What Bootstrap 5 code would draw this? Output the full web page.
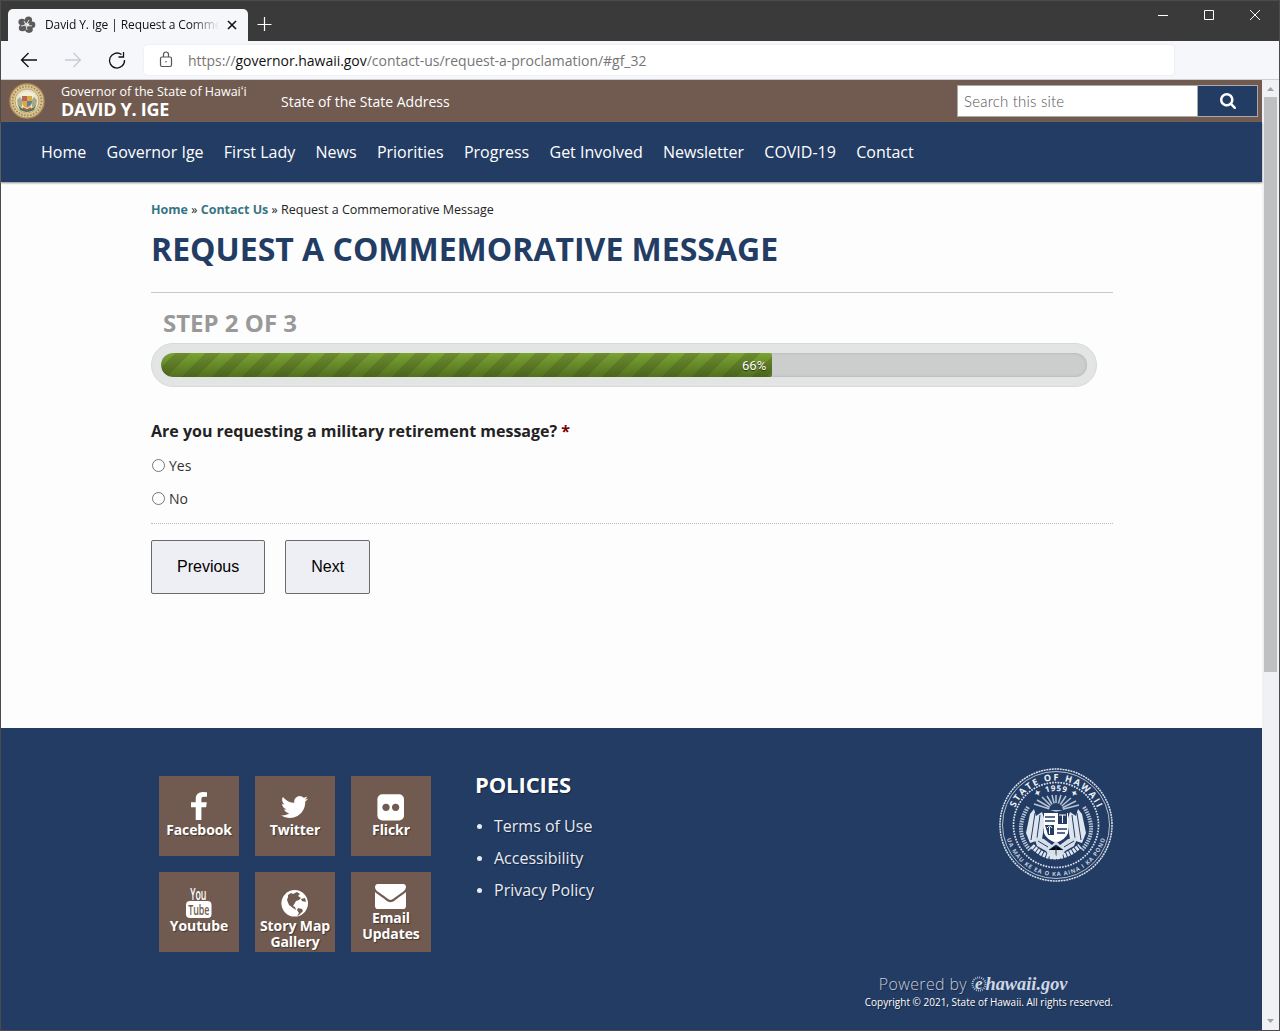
<!DOCTYPE html>
<html lang="en">
<head>
<meta charset="utf-8">
<meta name="viewport" content="width=device-width, initial-scale=1">
<title>David Y. Ige | Request a Commemorative Message</title>
<link href="https://cdn.jsdelivr.net/npm/bootstrap@5.3.0/dist/css/bootstrap.min.css" rel="stylesheet">
<style>
:root{--navy:#233c64;--brown:#715b50}
body{font-family:"Open Sans",sans-serif;color:#222;background:#3a3a3a;overflow:hidden}
a{text-decoration:none}
svg{display:block;flex:none}
.window-frame{width:1280px;height:1031px;border:1px solid #4b4b4b;background:#3a3a3a}
.titlebar{height:40px;padding-left:7px}
.browser-tab{width:240px;height:32px;background:#f6f7fb;border-radius:5px 5px 0 0;padding:0 10px}
.tab-title{width:174px;margin-left:9px;font-size:12px;letter-spacing:-.1px;color:#111;overflow:hidden;-webkit-mask-image:linear-gradient(90deg,#000 84%,transparent)}
.toolbar{height:39px;background:#f6f7fb;border-bottom:1px solid #cdced1;padding-left:17px}
.address{width:1030px;height:30px;background:#fff;border-radius:4px;box-shadow:0 0 2px #dfe1e7;margin-left:18px;padding-left:15px;font-size:14px;color:#767676;letter-spacing:-.03px}
.address b{font-weight:400;color:#111}
.viewport-row{height:950px}
.page{width:1261px;background:#fdfdfd}
.scrollbar{width:17px;background:#f0f1f5}
.scroll-thumb{width:13px;height:575px;background:#bfc0c2;margin:0 2px}
.agency{height:42px;background:var(--brown);color:#fff;padding:0 4px 0 8px}
.agency-name{width:220px;margin-left:16px;line-height:16px}
.agency-name span{font-size:12.5px;display:block}
.agency-name strong{font-size:18px;display:block;letter-spacing:-.3px;line-height:18px}
.site-search{width:301px;height:32px;border:1px solid #aaa;background:#fff}
.site-search input{width:239px;border:0;padding:0 6px;font:300 15px Lato,sans-serif;letter-spacing:.2px;color:#555;outline:0}
.site-search input::placeholder{color:#555;opacity:1}
.site-search button{width:60px;border:0;border-left:1px solid #aaa;background:var(--navy)}
.mainnav{height:60px;background:var(--navy);padding-left:40px;gap:20.3px;box-shadow:0 1px 2px #888;position:relative}
.mainnav a{color:#fff;font-size:16px}
.content{width:962px;margin-left:150px;height:546px;padding-top:19px}
.crumbs{font-size:12.5px;line-height:18px}
.crumbs a{color:#387582;font-weight:700}
h1{font-size:32px;line-height:40px;font-weight:700;color:var(--navy);margin:10px 0 0;padding-bottom:23px;height:64px;border-bottom:1px solid #c8caca}
.step-title{font-size:24px;line-height:32px;font-weight:700;color:#999;margin:14px 0 4px 12px}
.meter{width:946px;height:44px;padding:9px;border:1px solid #d8dada;border-radius:22px;background:#e3e5e4}
.meter .progress{height:24px;border-radius:12px;background:#cccecd;box-shadow:inset 0 0 3px #aaa}
.meter .progress-bar{border-radius:12px 2px 2px 12px;background-image:linear-gradient(to bottom,transparent,rgba(40,60,10,.5)),linear-gradient(135deg,#7ba334 25%,#6c8c2e 25%,#6c8c2e 50%,#7ba334 50%,#7ba334 75%,#6c8c2e 75%);background-size:100% 100%,30px 30px;text-align:right;padding-right:6px;font:13px Roboto,sans-serif;color:#fff;text-shadow:0 1px 1px #000a}
.question{font-size:16px;font-weight:700;line-height:24px;margin-top:32px}
.question i{font-style:normal;color:#790000}
.choice{font-size:14px;font-weight:400;line-height:20px;height:20px;color:#333}
.choice input{width:13px;height:13px;margin:3px 4px 0 1px}
.steps-footer{border-top:1px dotted #bbb;margin-top:14px;padding-top:16px;gap:20px}
.step-btn{height:54px;border:1px solid #6b6b6b;border-radius:2px;background:#eeeff4;font:16px "Liberation Sans",sans-serif;color:#000;padding:0 25px}
.site-footer{height:302px;background:var(--navy);color:#fff;padding:40px 0 0 158px;text-shadow:1px 1px 1px #0006}
.social{width:272px;gap:16px;margin-top:8px;height:176px}
.tile{width:80px;height:80px;background:var(--brown);color:#fff;font-size:14px;line-height:16px;font-weight:700;text-align:center;letter-spacing:-.1px}
.policies{width:240px;margin-left:44px}
.policies h2{font-size:22px;line-height:30px;font-weight:700;margin:1px 0 11px;letter-spacing:-.1px}
.policies ul{padding-left:19px;margin:0}
.policies li{font-size:16px;line-height:32px;color:#e7ecf4}
.policies li::marker{font-size:14px}
.footer-top{width:954px;height:206px}
.credits{width:954px;text-align:right}
.powered{font-size:16px;line-height:20px;font-weight:300;color:#c4cddb;padding-right:45px;letter-spacing:.35px}
.legal{font-size:10px;line-height:16px}
</style>
<script src="https://cdn.jsdelivr.net/npm/bootstrap@5.3.0/dist/js/bootstrap.bundle.min.js"></script>
</head>
<body>
<div class="window-frame">
  <header class="titlebar d-flex">
    <div class="browser-tab d-flex align-items-center align-self-end">
      <svg width="18" height="18" viewBox="0 0 18 18"><g fill="#5b5b5b"><ellipse cx="10.5" cy="4" rx="3.6" ry="3.5"/><ellipse cx="4" cy="6" rx="3.6" ry="3.2"/><ellipse cx="4.5" cy="12" rx="3.7" ry="3.3"/><ellipse cx="11" cy="13.6" rx="3.8" ry="3.3"/><ellipse cx="14.2" cy="8.8" rx="3.1" ry="3.3"/></g><path d="M8 9L6 5M8 9l-5 1M8 9l1 5M8 9l6 1M8 9l3-5" stroke="#ddd" stroke-width="1"/></svg>
      <div class="tab-title text-nowrap">David Y. Ige | Request a Commemorative</div>
      <svg width="10" height="10" viewBox="0 0 10 10" style="margin-left:8px"><path d="M1 1l8 8M9 1L1 9" stroke="#111" stroke-width="1.6"/></svg>
    </div>
    <svg width="16" height="16" viewBox="0 0 16 16" class="ms-2" style="margin-top:15px"><path d="M8.5 1v14M1.5 8.5h14" stroke="#fff" stroke-width="1.2"/></svg>
    <svg width="106" height="14" viewBox="0 0 106 14" class="ms-auto me-3" style="margin-top:7px"><path d="M1 7.5h10M47.5 2.500h9v9h-9zM93 2l10 10M103 2L93 12" fill="none" stroke="#fff"/></svg>
  </header>
  <div class="toolbar d-flex align-items-center">
    <svg width="108" height="22" viewBox="0 0 108 22" fill="none" stroke-width="1.3"><path d="M19 11H3.500M10.500 4L3.500 11l7 7" stroke="#111"/><path d="M47 11h15.500M55.500 4l7 7-7 7" stroke="#c9cacf"/><path d="M103.500 5.500A7.500 7.500 0 1 0 106.500 11M105.500 3v5h-5" stroke="#111"/></svg>
    <div class="address d-flex align-items-center">
      <svg width="14" height="18" viewBox="0 0 14 18" fill="none" stroke="#555" stroke-width="1.2"><rect x="1.500" y="6" width="11" height="9.500" rx="1.500"/><path d="M4.500 6V3.500a2.500 2.500 0 0 1 5 0V6"/><circle cx="7" cy="10.800" r=".8" fill="#555" stroke="none"/></svg>
      <span style="margin-left:15px">https://<b>governor.hawaii.gov</b>/contact-us/request-a-proclamation/#gf_32</span>
    </div>
  </div>
  <div class="viewport-row d-flex">
    <div class="page">
      <div class="agency d-flex align-items-center">
        <svg width="36" height="36" viewBox="0 0 36 36"><circle cx="18" cy="18" r="17" fill="#dcc798" stroke="#b3935b" stroke-width="1.400"/><circle cx="18" cy="18" r="14.500" fill="none" stroke="#9b8557" stroke-width="1.800" stroke-dasharray="1.500 1.500"/><circle cx="18" cy="18" r="12" fill="#e5e3cc" stroke="#c1a66a"/><path d="M8 17l3-3 2 3v7l-4-1zM28 17l-3-3-2 3v7l4-1z" fill="#a9a784"/><path d="M10 12q8-7 16 0l-3 3H13z" fill="#f2eed7"/><path d="M13 13h10v7q-1 4-5 5-4-1-5-5z" fill="#d4ad3e"/><path d="M13 13h5v5h-5z" fill="#b96261"/><path d="M18 18h5q0 4-5 6z" fill="#667ca1"/><path d="M9 22q9 9 18 0l-2 5q-7 4-14 0z" fill="#557650"/><path d="M14 25l4 2 4-2" stroke="#ba544a" fill="none" stroke-width="1.500"/></svg>
        <div class="agency-name"><span>Governor of the State of Hawaiʻi</span><strong>DAVID Y. IGE</strong></div>
        <a href="#" class="text-white state-link" style="font-size:14px">State of the State Address</a>
        <form class="site-search d-flex ms-auto"><input type="text" placeholder="Search this site" aria-label="Search this site"><button type="button" class="d-flex align-items-center justify-content-center" aria-label="Search"><svg width="16" height="16" viewBox="64 128 1664 1664" fill="#fff"><path d="M1216 832q0-185-131.500-316.500t-316.500-131.500-316.500 131.500-131.500 316.500 131.500 316.500 316.500 131.500 316.500-131.500 131.500-316.500zm512 832q0 52-38 90t-90 38q-54 0-90-38l-343-342q-179 124-399 124-143 0-273.500-55.500t-225-150-150-225-55.500-273.500 55.500-273.500 150-225 225-150 273.500-55.500 273.500 55.500 225 150 150 225 55.500 273.500q0 220-124 399l343 343q37 37 37 90z"/></svg></button></form>
      </div>
      <nav class="mainnav d-flex align-items-center">
        <a href="#">Home</a><a href="#">Governor Ige</a><a href="#">First Lady</a><a href="#">News</a><a href="#">Priorities</a><a href="#">Progress</a><a href="#">Get Involved</a><a href="#">Newsletter</a><a href="#">COVID-19</a><a href="#">Contact</a>
      </nav>
      <main class="content">
        <div class="crumbs"><a href="#">Home</a> » <a href="#">Contact Us</a> » Request a Commemorative Message</div>
        <h1>REQUEST A COMMEMORATIVE MESSAGE</h1>
        <h2 class="step-title">STEP 2 OF 3</h2>
        <div class="meter"><div class="progress"><div class="progress-bar" role="progressbar" aria-valuenow="66" aria-valuemin="0" aria-valuemax="100" style="width:66%"><span class="my-auto">66%</span></div></div></div>
        <div class="question">Are you requesting a military retirement message? <i>*</i></div>
        <label class="choice d-flex" style="margin-top:13px"><input type="radio" name="military">Yes</label>
        <label class="choice d-flex" style="margin-top:13px"><input type="radio" name="military">No</label>
        <div class="steps-footer d-flex"><button class="step-btn">Previous</button><button class="step-btn">Next</button></div>
      </main>
      <footer class="site-footer">
        <div class="footer-top d-flex">
          <div class="social d-flex flex-wrap">
            <a href="#" class="tile"><svg width="80" height="46"><svg x="32" y="16" width="16" height="28" viewBox="479 0 864 1664" preserveAspectRatio="none"><path fill="#fff" d="M1343 12v264h-157q-86 0-116 36t-30 108v189h293l-39 296h-254v759h-306v-759h-255v-296h255v-218q0-186 104-288.500t277-102.500q147 0 228 12z"/></svg></svg>Facebook</a>
            <a href="#" class="tile"><svg width="80" height="46"><svg x="26" y="20" width="27" height="22" viewBox="108 256 1576 1280"><path fill="#fff" d="M1684 408q-67 98-162 167 1 14 1 42 0 130-38 259.500t-115.500 248.500-184.500 210.500-258 146-323 54.500q-271 0-496-145 35 4 78 4 225 0 401-138-105-2-188-64.500t-114-159.500q33 5 61 5 43 0 85-11-112-23-185.500-111.500t-73.500-205.500v-4q68 38 146 41-66-44-105-115t-39-154q0-88 44-163 121 149 294.500 238.500t371.500 99.500q-8-38-8-74 0-134 94.500-228.500t228.500-94.500q140 0 236 102 109-21 205-78-37 115-142 178 93-10 186-50z"/></svg></svg>Twitter</a>
            <a href="#" class="tile"><svg width="80" height="46"><rect x="26.400" y="18.200" width="26.600" height="26.300" rx="5" fill="#fff"/><circle cx="35" cy="31.300" r="3.600" fill="#715b50"/><circle cx="44.600" cy="31.300" r="3.600" fill="#715b50"/></svg>Flickr</a>
            <a href="#" class="tile"><svg width="80" height="46" style="text-shadow:none"><rect x="27" y="29" width="25.500" height="17" rx="4" fill="#fff"/><g font-family="Open Sans,sans-serif" font-size="15.500" font-weight="600"><text transform="translate(31.200 27.500) scale(.62 1)" fill="#fff" textLength="26" lengthAdjust="spacingAndGlyphs">You</text><text transform="translate(29.300 43) scale(.62 1)" fill="#715b50" font-size="14.500" textLength="34" lengthAdjust="spacingAndGlyphs">Tube</text></g></svg>Youtube</a>
            <a href="#" class="tile"><svg width="80" height="46"><circle cx="39.700" cy="31.300" r="13.300" fill="#fff"/><path d="M33 23l3-2 2 1 4-2 3 2-2 2 3 2-2 2-3 1-3 5 2 1 1 3-3-2-4-3-2-5 1-3zM43 36l4 1 1 2-4 4-2 1 2-3-2-3zM46 27l4-1 1 4-4-1z" fill="#715b50"/></svg>Story Map Gallery</a>
            <a href="#" class="tile"><svg width="80" height="38"><svg x="24" y="12" width="31" height="25" viewBox="0 256 1792 1408" preserveAspectRatio="none"><path fill="#fff" d="M1792 710v794q0 66-47 113t-113 47h-1472q-66 0-113-47t-47-113v-794q44 49 101 87 362 246 497 345 57 42 92.500 65.500t94.500 48 110 24.500h2q51 0 110-24.500t94.500-48 92.500-65.500q170-123 498-345 57-39 100-87zm0-294q0 79-49 151t-122 123q-376 261-468 325-10 7-42.500 31t-54 38.500-52 32.500-57.500 27-50 9h-2q-23 0-50-9t-57.500-27-52-32.500-54-38.500-42.500-31q-91-64-262-182.500t-205-142.500q-62-42-117-115.500t-55-136.500q0-78 41.500-130t118.500-52h1472q65 0 112.500 47t47.500 113z"/></svg></svg>Email Updates</a>
          </div>
          <div class="policies"><h2>POLICIES</h2><ul><li>Terms of Use</li><li>Accessibility</li><li>Privacy Policy</li></ul></div>
          <svg class="ms-auto" width="114" height="114" viewBox="0 0 114 114" style="text-shadow:none">
            <defs><path id="sealTop" d="M12.500 57a44.500 44.500 0 0 1 89 0"/><path id="sealBottom" d="M6 57a51 51 0 0 0 102 0"/><path id="sealYear" d="M23 57a34 34 0 0 1 68 0"/></defs>
            <g fill="none" stroke="#dce3ed"><circle cx="57" cy="57" r="56" stroke-width="1.500" stroke-dasharray="2 .7"/><circle cx="57" cy="57" r="53.500" stroke-width=".8"/><circle cx="57" cy="57" r="42.500" stroke-width="1.700" stroke-dasharray="1.700 1.100"/></g>
            <g fill="#eef2f8" font-family="Open Sans,sans-serif" font-weight="700" text-anchor="middle"><text font-size="9"><textPath href="#sealTop" startOffset="50%" textLength="104">STATE OF HAWAII</textPath></text><text font-size="5.800" fill="#c2cede"><textPath href="#sealBottom" startOffset="50%" textLength="132">UA MAU KE EA O KA AINA I KA PONO</textPath></text><text font-size="8"><textPath href="#sealYear" startOffset="50%" textLength="42">✦ 1959 ✦</textPath></text></g>
            <path d="M57 43L35 36M57 43L38 32M57 43L43 29M57 43L48 28M57 43L53 27M57 43V27M57 43L62 27M57 43L67 28M57 43L72 30M57 43L77 33M57 43L80 37" stroke="#b8c5d8" stroke-width="1.500"/>
            <path d="M50 42a7 7 0 0 1 14 0z" fill="#233c64"/>
            <path d="M29 39q-15 24 2 43M85 39q15 24-2 43" fill="none" stroke="#b9c6d8" stroke-width="4" stroke-dasharray="1.500 1"/>
            <path d="M31 46l4-5 2 7 6-4 3 9-3 18-12 4-4-10zM83 46l-4-5-2 7-6-4-3 9 3 18 12 4 4-10z" fill="#dfe6ef"/><path d="M36 45l-4 27M41 47l-3 23M78 45l4 27M73 47l3 23" stroke="#233c64"/>
            <path d="M45 45h24v20q-2 6-12 10-10-4-12-10z" fill="#fff"/><path d="M46 49h10M46 53h10M58 61h10M58 65h8" stroke="#233c64" stroke-width="1.500"/><path d="M59 45h9v11h-9zM46 57h9v10h-6z" fill="#233c64"/><path d="M60 47h7M63.500 47v8M48 60q3-4 5 0M50.500 59v7" stroke="#fff" fill="none"/>
            <path d="M35 69l10 2 8 6 4-4 4 4 8-6 10-2-4 9-9 5-5 8h-9l-5-8-9-5z" fill="#d6deea"/><path d="M39 73l10 6M75 73l-10 6M50 82l7-5 7 5M57 77v11" stroke="#233c64"/><path d="M33 78q22 22 48 0" fill="none" stroke="#dfe6ef" stroke-width="5" stroke-dasharray="2.500 1"/>
          </svg>
        </div>
        <div class="credits">
          <div class="powered d-flex justify-content-end align-items-center"><span>Powered by</span>
            <svg width="97" height="20" viewBox="0 0 97 20" style="text-shadow:none;margin-left:4px"><circle cx="8" cy="10" r="6.500" fill="none" stroke="#aebbd0" stroke-width="2" stroke-dasharray="1 1"/><g fill="#cfd7e4" font-family="Liberation Serif,serif" font-style="italic" font-weight="700" letter-spacing="0"><text x="4" y="15" font-size="17">e</text><text x="14.500" y="15.500" font-size="19" textLength="82" lengthAdjust="spacingAndGlyphs">hawaii.gov</text></g></svg>
          </div>
          <div class="legal">Copyright © 2021, State of Hawaii. All rights reserved.</div>
        </div>
      </footer>
    </div>
    <div class="scrollbar"><svg width="17" height="17"><path d="M5 11l3.500-4L12 11z" fill="#a0a1a4"/></svg><div class="scroll-thumb"></div><svg width="17" height="17" style="margin-top:341px"><path d="M5 6h7L8.500 10z" fill="#a0a1a4"/></svg></div>
  </div>
</div>
</body>
</html>
